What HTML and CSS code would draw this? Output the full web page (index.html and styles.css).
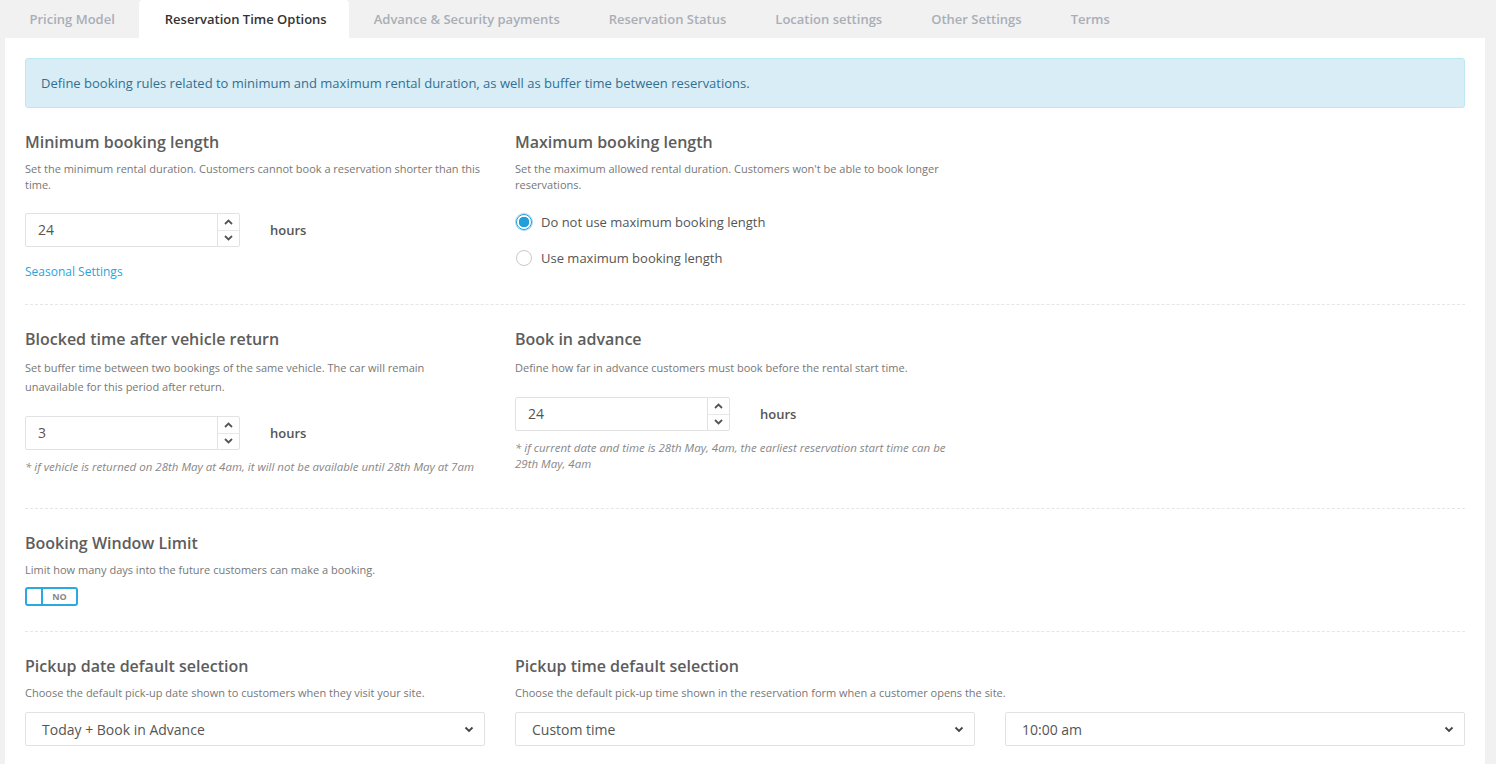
FILE: index.html
```html
<!DOCTYPE html>
<html lang="en">

<head>
    <meta charset="UTF-8">
    <meta name="viewport" content="width=device-width, initial-scale=1.0">
    <title>Reservation Time Options</title>
    <link rel="stylesheet" href="styles.css">
</head>

<body>
    <div class="tabs">
        <div class="tab">Pricing Model</div>
        <div class="tab active">Reservation Time Options</div>
        <div class="tab">Advance &amp; Security payments</div>
        <div class="tab">Reservation Status</div>
        <div class="tab">Location settings</div>
        <div class="tab">Other Settings</div>
        <div class="tab">Terms</div>
    </div>

    <div class="panel">
        <div class="alert">Define booking rules related to minimum and maximum rental duration, as well as buffer time between reservations.</div>

        <div class="section first">
            <div class="field">
                <h3>Minimum booking length</h3>
                <p class="desc">Set the minimum rental duration. Customers cannot book a reservation shorter than this time.</p>
                <div class="num-row">
                    <div class="num-input">
                        <span class="value">24</span>
                        <div class="spin">
                            <span><svg width="9" height="6" viewBox="0 0 9 6"><path d="M1 5L4.5 1.5L8 5" fill="none" stroke="#555" stroke-width="1.8"/></svg></span>
                            <span><svg width="9" height="6" viewBox="0 0 9 6"><path d="M1 1L4.5 4.5L8 1" fill="none" stroke="#555" stroke-width="1.8"/></svg></span>
                        </div>
                    </div>
                    <span class="unit">hours</span>
                </div>
                <a class="link" href="#">Seasonal Settings</a>
            </div>
            <div class="field">
                <h3>Maximum booking length</h3>
                <p class="desc">Set the maximum allowed rental duration. Customers won't be able to book longer reservations.</p>
                <label class="radio"><span class="dot checked"></span>Do not use maximum booking length</label>
                <label class="radio"><span class="dot"></span>Use maximum booking length</label>
            </div>
        </div>

        <div class="section second">
            <div class="field">
                <h3>Blocked time after vehicle return</h3>
                <p class="desc tall">Set buffer time between two bookings of the same vehicle. The car will remain unavailable for this period after return.</p>
                <div class="num-row">
                    <div class="num-input">
                        <span class="value">3</span>
                        <div class="spin">
                            <span><svg width="9" height="6" viewBox="0 0 9 6"><path d="M1 5L4.5 1.5L8 5" fill="none" stroke="#555" stroke-width="1.8"/></svg></span>
                            <span><svg width="9" height="6" viewBox="0 0 9 6"><path d="M1 1L4.5 4.5L8 1" fill="none" stroke="#555" stroke-width="1.8"/></svg></span>
                        </div>
                    </div>
                    <span class="unit">hours</span>
                </div>
                <p class="note">* if vehicle is returned on 28th May at 4am, it will not be available until 28th May at 7am</p>
            </div>
            <div class="field">
                <h3>Book in advance</h3>
                <p class="desc tall">Define how far in advance customers must book before the rental start time.</p>
                <div class="num-row">
                    <div class="num-input">
                        <span class="value">24</span>
                        <div class="spin">
                            <span><svg width="9" height="6" viewBox="0 0 9 6"><path d="M1 5L4.5 1.5L8 5" fill="none" stroke="#555" stroke-width="1.8"/></svg></span>
                            <span><svg width="9" height="6" viewBox="0 0 9 6"><path d="M1 1L4.5 4.5L8 1" fill="none" stroke="#555" stroke-width="1.8"/></svg></span>
                        </div>
                    </div>
                    <span class="unit">hours</span>
                </div>
                <p class="note">* if current date and time is 28th May, 4am, the earliest reservation start time can be 29th May, 4am</p>
            </div>
        </div>

        <div class="section third">
            <div class="field wide">
                <h3>Booking Window Limit</h3>
                <p class="desc short">Limit how many days into the future customers can make a booking.</p>
                <div class="toggle">
                    <span class="knob"></span>
                    <span class="label">NO</span>
                </div>
            </div>
        </div>

        <div class="section last">
            <div class="field">
                <h3>Pickup date default selection</h3>
                <p class="desc short">Choose the default pick-up date shown to customers when they visit your site.</p>
                <div class="select">
                    <span>Today + Book in Advance</span>
                    <svg width="10" height="7" viewBox="0 0 10 7"><path d="M1.5 1.5L5 5L8.5 1.5" fill="none" stroke="#444" stroke-width="1.8"/></svg>
                </div>
            </div>
            <div class="field double">
                <h3>Pickup time default selection</h3>
                <p class="desc short">Choose the default pick-up time shown in the reservation form when a customer opens the site.</p>
                <div class="select-pair">
                    <div class="select">
                        <span>Custom time</span>
                        <svg width="10" height="7" viewBox="0 0 10 7"><path d="M1.5 1.5L5 5L8.5 1.5" fill="none" stroke="#444" stroke-width="1.8"/></svg>
                    </div>
                    <div class="select">
                        <span>10:00 am</span>
                        <svg width="10" height="7" viewBox="0 0 10 7"><path d="M1.5 1.5L5 5L8.5 1.5" fill="none" stroke="#444" stroke-width="1.8"/></svg>
                    </div>
                </div>
            </div>
        </div>
    </div>
</body>

</html>
```

FILE: styles.css
```css
body {
    margin: 0;
    padding: 0;
    background-color: #f1f1f2;
    font-family: 'Open Sans', 'Noto Sans', sans-serif;
    color: #555;
}

.tabs {
    display: flex;
    height: 38px;
    padding-left: 5px;
}

.tab {
    padding: 0 24.5px;
    line-height: 38px;
    font-size: 13px;
    font-weight: 600;
    color: #a9aeb6;
    border-radius: 4px 4px 0 0;
}

.tab.active {
    background-color: #fff;
    color: #333;
    padding: 0 22.5px 0 25.5px;
}

.panel {
    background-color: #fff;
    margin: 0 11px 0 5px;
    padding: 20px 20px 30px;
    min-height: 700px;
}

.alert {
    background-color: #d9edf7;
    border: 1px solid #bce8f1;
    border-radius: 3px;
    color: #31708f;
    font-size: 13px;
    line-height: 16px;
    padding: 16px 15px;
}

.section {
    display: grid;
    grid-template-columns: repeat(3, 1fr);
    column-gap: 30px;
    padding: 24px 0 24px;
    border-bottom: 1px dashed #e6e6e6;
}

.section.second {
    padding-bottom: 33px;
}

.section.third {
    padding-bottom: 25px;
}

.section.last {
    border-bottom: none;
}

.field.wide {
    grid-column: span 3;
}

.field.double {
    grid-column: span 2;
}

h3 {
    margin: 0 0 9px;
    font-size: 16px;
    line-height: 20px;
    font-weight: 600;
    color: #5d5d5d;
}

.desc {
    margin: 0 0 20px;
    font-size: 11px;
    line-height: 16px;
    color: #777;
}

.desc.tall {
    line-height: 19px;
}

.desc.short {
    margin-bottom: 11px;
}

.section.third .desc.short {
    margin-bottom: 9px;
}

.num-row {
    display: flex;
    align-items: center;
    gap: 30px;
}

.num-input {
    display: flex;
    width: 215px;
    height: 34px;
    box-sizing: border-box;
    border: 1px solid #e2e2e2;
    border-radius: 2px;
}

.num-input .value {
    flex: 1;
    padding-left: 12px;
    line-height: 32px;
    font-size: 14px;
    color: #555;
}

.spin {
    width: 21px;
    border-left: 1px solid #e2e2e2;
    display: flex;
    flex-direction: column;
}

.spin span {
    flex: 1;
    display: flex;
    align-items: center;
    justify-content: center;
}

.spin span:first-child {
    border-bottom: 1px solid #e8e8e8;
}

.unit {
    font-size: 13px;
    font-weight: 600;
    color: #555;
}

.link {
    display: block;
    margin-top: 17px;
    font-size: 12px;
    line-height: 16px;
    color: #2aa3dc;
    text-decoration: none;
}

.radio {
    display: flex;
    align-items: center;
    gap: 9px;
    height: 20px;
    margin-top: -1px;
    margin-bottom: 17px;
    font-size: 13px;
    color: #555;
}

.radio:last-child {
    margin-bottom: 0;
}

.dot {
    width: 14px;
    height: 14px;
    border: 1px solid #c8c8c8;
    border-radius: 50%;
    box-sizing: content-box;
    margin-left: 1px;
}

.dot.checked {
    border-color: #1f9fdb;
    background: radial-gradient(circle, #1f9fdb 0 5px, #fff 5.5px);
    box-shadow: 0 0 0 1px #a6d8f1;
}

.note {
    margin: 9px 0 0;
    max-width: 452px;
    font-size: 11.5px;
    line-height: 16px;
    font-style: italic;
    color: #888;
}

.toggle {
    display: flex;
    width: 53px;
    height: 19px;
    box-sizing: border-box;
    border: 2px solid #29a9e0;
    border-radius: 3px;
}

.toggle .knob {
    width: 14px;
    border-right: 2px solid #29a9e0;
}

.toggle .label {
    flex: 1;
    text-align: center;
    font-size: 9px;
    font-weight: 700;
    line-height: 15px;
    color: #888;
}

.select-pair {
    display: grid;
    grid-template-columns: 1fr 1fr;
    column-gap: 30px;
}

.select {
    display: flex;
    align-items: center;
    justify-content: space-between;
    height: 34px;
    box-sizing: border-box;
    border: 1px solid #e2e2e2;
    border-radius: 2px;
    padding: 0 10px 0 16px;
    font-size: 14px;
    color: #555;
}
```
